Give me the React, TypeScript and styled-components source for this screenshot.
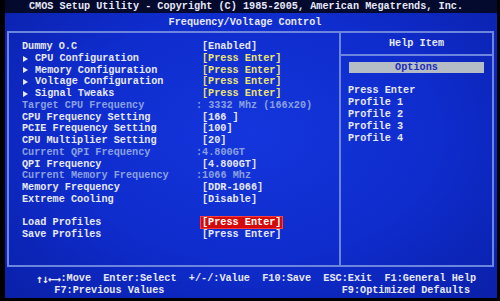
import React from 'react'
import styled, { createGlobalStyle } from 'styled-components'

const GlobalStyle = createGlobalStyle`
  html, body {
    margin: 0;
    padding: 0;
    background: #000;
  }
`

const mono = `'Liberation Mono', 'DejaVu Sans Mono', monospace`

const Page = styled.div`
  width: 500px;
  height: 301px;
  box-sizing: border-box;
  padding: 0 3px 3px 5px;
  background: #000;
  font-family: ${mono};
  font-size: 10.2px;
  font-weight: bold;
  overflow: hidden;
`

const Screen = styled.div`
  height: 100%;
  display: flex;
  flex-direction: column;
  background: radial-gradient(ellipse at 50% 45%, #1436dc 0%, #0f2ccc 55%, #0a20a8 100%);
  color: #e6e8f6;
`

const TitleBar = styled.div`
  height: 13px;
  line-height: 13px;
  background: #04092e;
  text-align: center;
  padding-right: 10px;
  white-space: pre;
`

const SubTitle = styled.div`
  height: 18px;
  line-height: 19px;
  text-align: center;
  padding-right: 12px;
`

const Frame = styled.div`
  height: 236px;
  margin: 0 3px 0 2px;
  box-sizing: border-box;
  border: 2px solid #6c86e0;
  display: grid;
  grid-template-columns: 330px 1fr;
`

const LeftPanel = styled.div`
  padding: 8px 0 0 13px;
`

const Row = styled.div`
  display: grid;
  grid-template-columns: 174px auto;
  height: 11.77px;
  line-height: 11.77px;
  white-space: pre;
`

const Label = styled.span<{ $dim?: boolean }>`
  color: ${p => (p.$dim ? '#8aa0e2' : '#e6e8f6')};
  display: flex;
  align-items: center;
`

const Value = styled.span<{ $tone?: 'white' | 'yellow' | 'dim'; $bracket?: boolean }>`
  justify-self: start;
  padding-left: ${p => (p.$bracket ? '6px' : '0')};
  color: ${p => (p.$tone === 'yellow' ? '#ece46e' : p.$tone === 'dim' ? '#8aa0e2' : '#e6e8f6')};
`

const Selected = styled.span`
  background: #d40a0a;
  color: #fff;
  outline: 1px solid #ff4040;
  padding: 0 1px;
  margin-left: -1px;
`

const Arrow = styled.span`
  display: inline-block;
  width: 0;
  height: 0;
  border-top: 3px solid transparent;
  border-bottom: 3px solid transparent;
  border-left: 5px solid #e6e8f6;
  margin: 0 7px 0 1px;
`

const Spacer = styled.div`
  height: 11.77px;
`

const RightPanel = styled.div`
  border-left: 2px solid #6c86e0;
  display: flex;
  flex-direction: column;
`

const HelpHead = styled.div`
  height: 21px;
  line-height: 21px;
  text-align: center;
  border-bottom: 2px solid #6c86e0;
`

const OptionsBar = styled.div`
  margin: 6px 8px 0 8px;
  height: 11px;
  line-height: 11px;
  background: #b4bcc6;
  color: #1a2cb8;
  text-align: center;
`

const HelpText = styled.div`
  margin-top: 12px;
  padding-left: 7px;
  line-height: 12px;
  white-space: pre;
`

const Footer = styled.div`
  padding: 6px 0 0 31px;
  line-height: 12px;
  white-space: pre;
`

const KeyGlyph = styled.span`
  display: inline-block;
  width: 6.12px;
  text-align: center;
  font-family: 'DejaVu Sans Mono', monospace;
  font-size: 11.5px;
  line-height: 12px;
  vertical-align: top;
`

type Item = {
  label: string
  sub?: boolean
  dim?: boolean
  value?: string
  tone?: 'white' | 'yellow' | 'dim'
  colon?: boolean
  selected?: boolean
  gap?: boolean
}

const items: Item[] = [
  { label: 'Dummy O.C', value: '[Enabled]' },
  { label: 'CPU Configuration', sub: true, value: '[Press Enter]', tone: 'yellow' },
  { label: 'Memory Configuration', sub: true, value: '[Press Enter]', tone: 'yellow' },
  { label: 'Voltage Configuration', sub: true, value: '[Press Enter]', tone: 'yellow' },
  { label: 'Signal Tweaks', sub: true, value: '[Press Enter]', tone: 'yellow' },
  { label: 'Target CPU Frequency', dim: true, value: ': 3332 Mhz (166x20)', tone: 'dim', colon: true },
  { label: 'CPU Frequency Setting', value: '[166 ]' },
  { label: 'PCIE Frequency Setting', value: '[100]' },
  { label: 'CPU Multiplier Setting', value: '[20]' },
  { label: 'Current QPI Frequency', dim: true, value: ':4.800GT', tone: 'dim', colon: true },
  { label: 'QPI Frequency', value: '[4.800GT]' },
  { label: 'Current Memory Frequency', dim: true, value: ':1066 Mhz', tone: 'dim', colon: true },
  { label: 'Memory Frequency', value: '[DDR-1066]' },
  { label: 'Extreme Cooling', value: '[Disable]' },
  { label: '', gap: true },
  { label: 'Load Profiles', value: '[Press Enter]', selected: true },
  { label: 'Save Profiles', value: '[Press Enter]' },
]

const helpLines = ['Press Enter', 'Profile 1', 'Profile 2', 'Profile 3', 'Profile 4']

export default function App() {
  return (
    <Page>
      <GlobalStyle />
      <Screen>
        <TitleBar>CMOS Setup Utility - Copyright (C) 1985-2005, American Megatrends, Inc.</TitleBar>
        <SubTitle>Frequency/Voltage Control</SubTitle>
        <Frame>
          <LeftPanel>
            {items.map((it, i) =>
              it.gap ? (
                <Spacer key={i} />
              ) : (
                <Row key={i}>
                  <Label $dim={it.dim}>
                    {it.sub && <Arrow />}
                    {it.label}
                  </Label>
                  <Value $tone={it.tone} $bracket={!it.colon}>
                    {it.selected ? <Selected>{it.value}</Selected> : it.value}
                  </Value>
                </Row>
              )
            )}
          </LeftPanel>
          <RightPanel>
            <HelpHead>Help Item</HelpHead>
            <OptionsBar>Options</OptionsBar>
            <HelpText>
              {helpLines.map(l => (
                <div key={l}>{l}</div>
              ))}
            </HelpText>
          </RightPanel>
        </Frame>
        <Footer>
          <div>
            {['↑', '↓', '←', '→'].map(g => (
              <KeyGlyph key={g}>{g}</KeyGlyph>
            ))}
            {':Move  Enter:Select  +/-/:Value  F10:Save  ESC:Exit  F1:General Help'}
          </div>
          <div>{'   F7:Previous Values                             F9:Optimized Defaults'}</div>
        </Footer>
      </Screen>
    </Page>
  )
}
